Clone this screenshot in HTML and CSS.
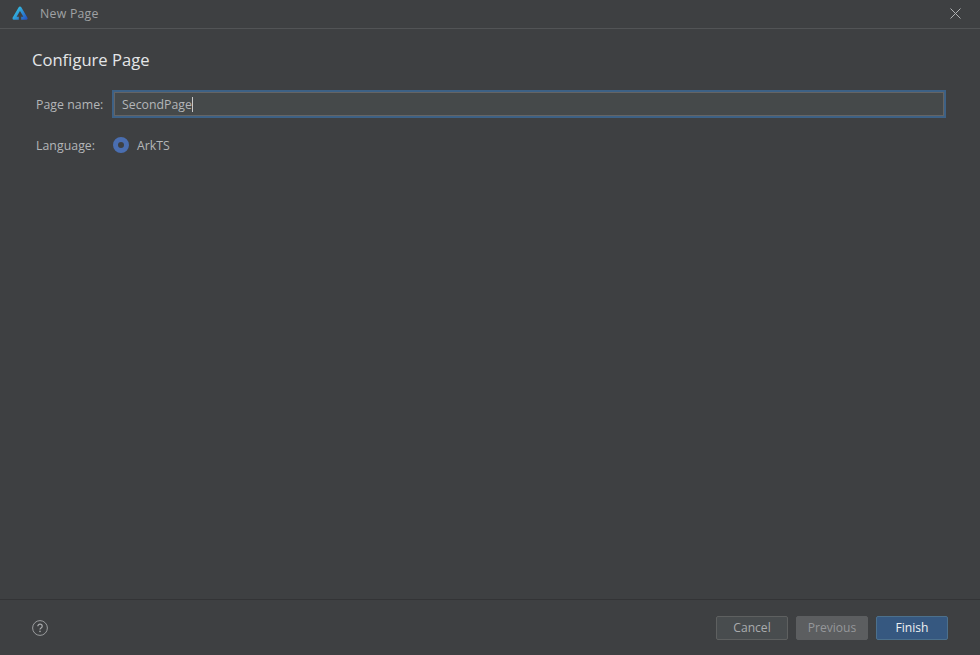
FILE: index.html
```html
<!DOCTYPE html>
<html lang="en">
<head>
<meta charset="utf-8">
<title>New Page</title>
<link rel="stylesheet" href="styles.css">
</head>
<body>
<div class="dialog">
  <header class="titlebar">
    <svg class="logo" width="16" height="14" viewBox="0 0 16 14" aria-hidden="true">
      <defs>
        <linearGradient id="lg" gradientUnits="userSpaceOnUse" x1="2" y1="3" x2="14" y2="13">
          <stop offset="0" stop-color="#36cbe6"/>
          <stop offset="1" stop-color="#2558c4"/>
        </linearGradient>
      </defs>
      <path fill="none" stroke="url(#lg)" stroke-width="3" stroke-linejoin="round" d="M6.800 12.300H2L8 2l6 10.300H9.200"/>
    </svg>
    <span class="title">New Page</span>
    <svg class="close" width="11" height="11" viewBox="0 0 11 11" aria-hidden="true">
      <path d="M.5.5l10 10M10.500.5l-10 10" stroke="#afb1b3" stroke-width="1" fill="none"/>
    </svg>
  </header>
  <main class="content">
    <h1 class="heading">Configure Page</h1>
    <div class="row name-row">
      <label class="label">Page name:</label>
      <div class="input"><span>SecondPage</span><i class="caret"></i></div>
    </div>
    <div class="row lang-row">
      <span class="label">Language:</span>
      <span class="radio"></span>
      <span class="radio-text">ArkTS</span>
    </div>
  </main>
  <footer class="footer">
    <svg class="help" width="16" height="16" viewBox="0 0 16 16" aria-hidden="true">
      <circle cx="8" cy="8" r="7.400" fill="none" stroke="#9a9c9e" stroke-width="1"/>
      <path d="M5.800 6.300c0-1.300 1-2.100 2.200-2.100s2.200.8 2.200 2c0 1.800-2.200 1.700-2.200 3.400" fill="none" stroke="#a9abad" stroke-width="1.200"/>
      <rect x="7.300" y="10.700" width="1.400" height="1.400" fill="#a9abad"/>
    </svg>
    <div class="buttons">
      <button class="btn cancel">Cancel</button>
      <button class="btn previous">Previous</button>
      <button class="btn finish">Finish</button>
    </div>
  </footer>
</div>
</body>
</html>
```

FILE: styles.css
```css
* { box-sizing: border-box; }
html, body { margin: 0; height: 100%; }
body { background: #3e4042; font-family: "Open Sans", "Noto Sans", sans-serif; font-size: 12.3px; color: #b4b6b8; }
.dialog { width: 980px; height: 655px; display: flex; flex-direction: column; background: #3e4042; }
.titlebar { height: 29px; flex: none; display: flex; align-items: center; padding: 0 19px 2px 12px; border-bottom: 1px solid #525456; }
.logo { flex: none; }
.title { margin-left: 12px; color: #a0a2a4; font-size: 12.3px; letter-spacing: .25px; }
.close { margin-left: auto; }
.content { flex: 1; padding: 20px 35px 0 32px; }
.heading { margin: 0; font-size: 16.600px; line-height: 22px; font-weight: 400; color: #e4e6e8; }
.row { display: flex; align-items: center; padding-left: 4px; }
.name-row { margin-top: 21px; }
.lang-row { margin-top: 21px; }
.label { width: 73px; flex: none; color: #b4b6b8; letter-spacing: .05px; }
.input { width: 830px; height: 24px; margin-left: 5px; flex: none; display: flex; align-items: center; padding-left: 7px; background: #45494a; border: 1px solid #646464; outline: 2px solid #3d6185; color: #b4b6b8; }
.caret { width: 1px; height: 15px; background: #c8c8c8; }
.radio { width: 16px; height: 16px; margin-left: 4px; margin-top: -2px; flex: none; border-radius: 50%; border: 5px solid #4a6eb0; background: #3e4042; }
.radio-text { margin-left: 8px; }
.footer { height: 56px; flex: none; display: flex; align-items: center; justify-content: space-between; padding: 0 32px; border-top: 1px solid #333436; }
.buttons { display: flex; gap: 8px; }
.btn { width: 72px; height: 24px; padding: 0; font: inherit; font-size: 12.100px; letter-spacing: 0; border-radius: 2px; border: 1px solid #5e6060; }
.cancel { background: #484c4e; color: #a9abad; }
.previous { background: #5c5e60; border-color: #5c5e60; color: #95979a; }
.finish { background: #365880; border-color: #4c708c; color: #eef0f2; }
```
